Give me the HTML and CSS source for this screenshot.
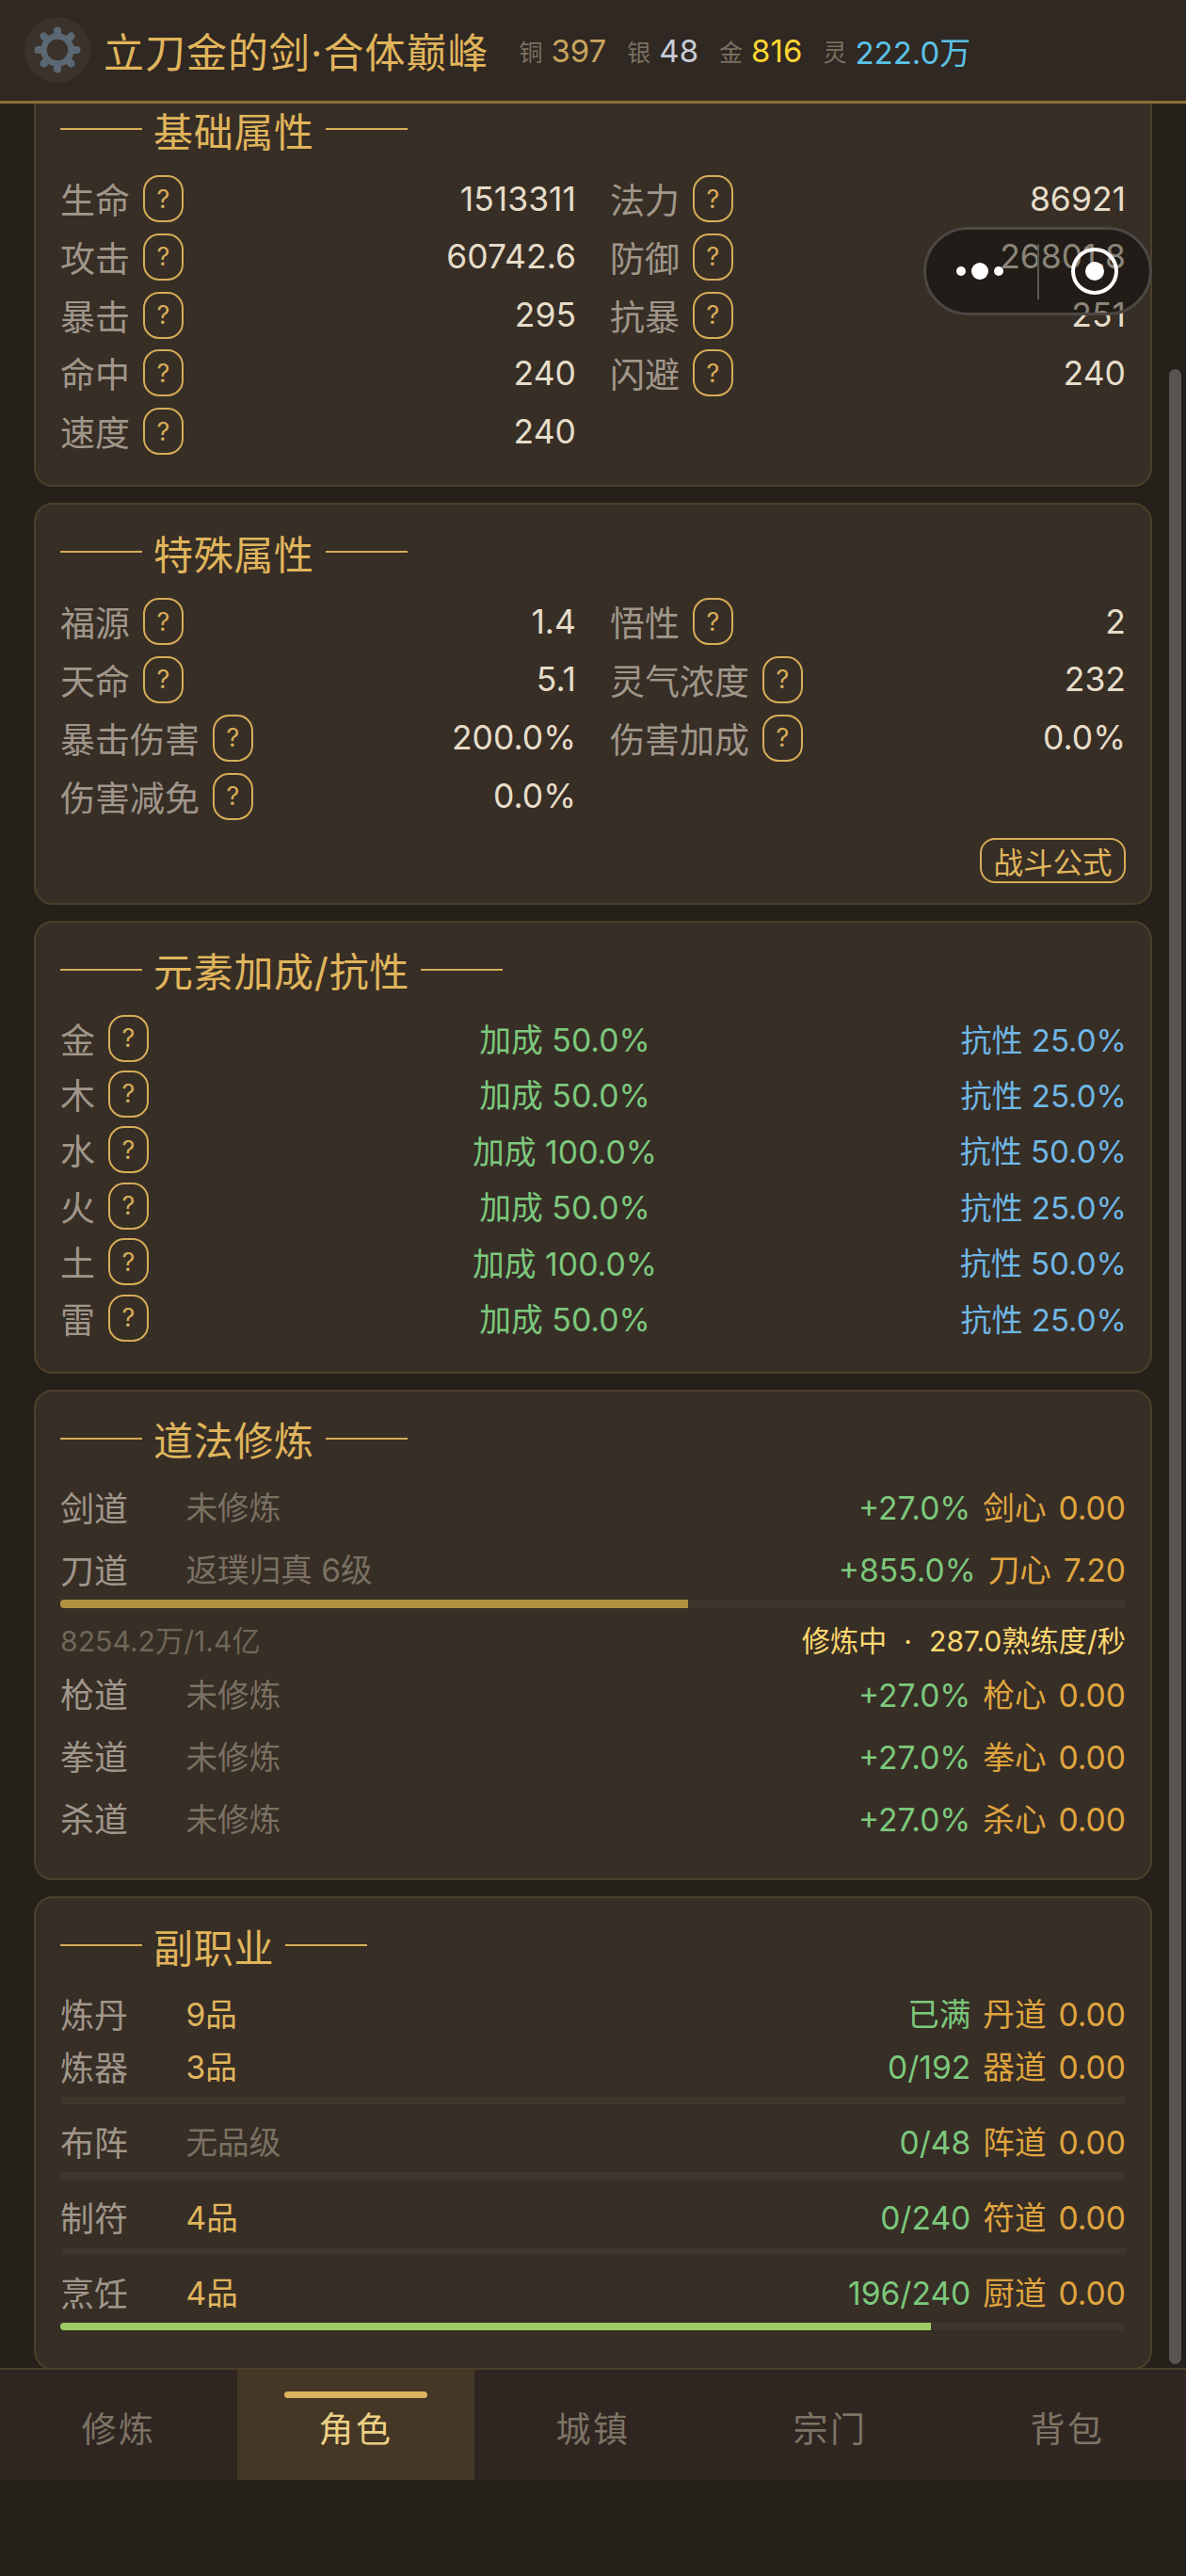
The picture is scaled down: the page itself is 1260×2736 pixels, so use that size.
FILE: index.html
```html
<!DOCTYPE html>
<html lang="zh">
<head>
  <meta charset="utf-8">
  <title>角色</title>
  <link rel="stylesheet" href="styles.css">
</head>
<body>
<div class="app">
  <header class="topbar">
    <div class="gear">
      <svg viewBox="0 0 70 70" width="70" height="70">
        <circle cx="35" cy="35" r="14.5" fill="none" stroke="#5b6873" stroke-width="6.5"/>
        <g stroke="#5b6873" stroke-width="8" stroke-linecap="round">
          <path d="M35 17V14.5M35 53V55.5M17 35H14.5M53 35H55.5"/>
          <path d="M22.3 22.3L20.5 20.5M47.7 22.3L49.5 20.5M22.3 47.7L20.5 49.5M47.7 47.7L49.5 49.5"/>
        </g>
      </svg>
    </div>
    <div class="player">立刀金的剑·合体巅峰</div>
    <div class="money">
      <span class="coin"><i>铜</i><b class="copper">397</b></span>
      <span class="coin"><i>银</i><b class="silver">48</b></span>
      <span class="coin"><i>金</i><b class="gold">816</b></span>
      <span class="coin"><i>灵</i><b class="spirit">222.0万</b></span>
    </div>
  </header>

  <main class="scroller">
    <section class="card card-first">
      <h2 class="card-title"><span>基础属性</span></h2>
      <div class="attr-grid">
        <div class="attr"><span class="attr-name">生命</span><span class="help">?</span><span class="attr-val">1513311</span></div>
        <div class="attr"><span class="attr-name">法力</span><span class="help">?</span><span class="attr-val">86921</span></div>
        <div class="attr"><span class="attr-name">攻击</span><span class="help">?</span><span class="attr-val">60742.6</span></div>
        <div class="attr"><span class="attr-name">防御</span><span class="help">?</span><span class="attr-val">26801.8</span></div>
        <div class="attr"><span class="attr-name">暴击</span><span class="help">?</span><span class="attr-val">295</span></div>
        <div class="attr"><span class="attr-name">抗暴</span><span class="help">?</span><span class="attr-val">251</span></div>
        <div class="attr"><span class="attr-name">命中</span><span class="help">?</span><span class="attr-val">240</span></div>
        <div class="attr"><span class="attr-name">闪避</span><span class="help">?</span><span class="attr-val">240</span></div>
        <div class="attr"><span class="attr-name">速度</span><span class="help">?</span><span class="attr-val">240</span></div>
      </div>
    </section>

    <section class="card card-special">
      <h2 class="card-title"><span>特殊属性</span></h2>
      <div class="attr-grid">
        <div class="attr"><span class="attr-name">福源</span><span class="help">?</span><span class="attr-val">1.4</span></div>
        <div class="attr"><span class="attr-name">悟性</span><span class="help">?</span><span class="attr-val">2</span></div>
        <div class="attr"><span class="attr-name">天命</span><span class="help">?</span><span class="attr-val">5.1</span></div>
        <div class="attr"><span class="attr-name">灵气浓度</span><span class="help">?</span><span class="attr-val">232</span></div>
        <div class="attr"><span class="attr-name">暴击伤害</span><span class="help">?</span><span class="attr-val">200.0%</span></div>
        <div class="attr"><span class="attr-name">伤害加成</span><span class="help">?</span><span class="attr-val">0.0%</span></div>
        <div class="attr"><span class="attr-name">伤害减免</span><span class="help">?</span><span class="attr-val">0.0%</span></div>
      </div>
      <div class="formula-line"><span class="formula">战斗公式</span></div>
    </section>

    <section class="card card-element">
      <h2 class="card-title card-title-element"><span>元素加成/抗性</span></h2>
      <div class="elements">
        <div class="element"><div class="element-name"><span class="attr-name">金</span><span class="help">?</span></div><span class="bonus">加成 50.0%</span><span class="resist">抗性 25.0%</span></div>
        <div class="element"><div class="element-name"><span class="attr-name">木</span><span class="help">?</span></div><span class="bonus">加成 50.0%</span><span class="resist">抗性 25.0%</span></div>
        <div class="element"><div class="element-name"><span class="attr-name">水</span><span class="help">?</span></div><span class="bonus">加成 100.0%</span><span class="resist">抗性 50.0%</span></div>
        <div class="element"><div class="element-name"><span class="attr-name">火</span><span class="help">?</span></div><span class="bonus">加成 50.0%</span><span class="resist">抗性 25.0%</span></div>
        <div class="element"><div class="element-name"><span class="attr-name">土</span><span class="help">?</span></div><span class="bonus">加成 100.0%</span><span class="resist">抗性 50.0%</span></div>
        <div class="element"><div class="element-name"><span class="attr-name">雷</span><span class="help">?</span></div><span class="bonus">加成 50.0%</span><span class="resist">抗性 25.0%</span></div>
      </div>
    </section>

    <section class="card card-dao">
      <h2 class="card-title card-title-dao"><span>道法修炼</span></h2>
      <div class="dao-list">
        <div class="line"><span class="line-name">剑道</span><span class="line-level muted">未修炼</span><div class="line-right"><span class="plus">+27.0%</span><span class="heart">剑心</span><span class="heart">0.00</span></div></div>
        <div class="dao-active">
          <div class="line"><span class="line-name">刀道</span><span class="line-level muted">返璞归真 6级</span><div class="line-right"><span class="plus">+855.0%</span><span class="heart">刀心</span><span class="heart">7.20</span></div></div>
          <div class="bar bar-dao"><div class="bar-fill fill-dao" style="width: 58.9%"></div></div>
          <div class="dao-sub"><span class="exp">8254.2万/1.4亿</span><span class="speed">修炼中<span class="speed-dot">·</span>287.0熟练度/秒</span></div>
        </div>
        <div class="line"><span class="line-name">枪道</span><span class="line-level muted">未修炼</span><div class="line-right"><span class="plus">+27.0%</span><span class="heart">枪心</span><span class="heart">0.00</span></div></div>
        <div class="line"><span class="line-name">拳道</span><span class="line-level muted">未修炼</span><div class="line-right"><span class="plus">+27.0%</span><span class="heart">拳心</span><span class="heart">0.00</span></div></div>
        <div class="line"><span class="line-name">杀道</span><span class="line-level muted">未修炼</span><div class="line-right"><span class="plus">+27.0%</span><span class="heart">杀心</span><span class="heart">0.00</span></div></div>
      </div>
    </section>

    <section class="card card-job">
      <h2 class="card-title card-title-job"><span>副职业</span></h2>
      <div class="job-list">
        <div class="job job-full">
          <div class="line"><span class="line-name">炼丹</span><span class="line-level grade">9品</span><div class="line-right"><span class="plus">已满</span><span class="heart">丹道</span><span class="heart">0.00</span></div></div>
        </div>
        <div class="job">
          <div class="line"><span class="line-name">炼器</span><span class="line-level grade">3品</span><div class="line-right"><span class="plus">0/192</span><span class="heart">器道</span><span class="heart">0.00</span></div></div>
          <div class="bar"></div>
        </div>
        <div class="job">
          <div class="line"><span class="line-name">布阵</span><span class="line-level muted">无品级</span><div class="line-right"><span class="plus">0/48</span><span class="heart">阵道</span><span class="heart">0.00</span></div></div>
          <div class="bar"></div>
        </div>
        <div class="job">
          <div class="line"><span class="line-name">制符</span><span class="line-level grade">4品</span><div class="line-right"><span class="plus">0/240</span><span class="heart">符道</span><span class="heart">0.00</span></div></div>
          <div class="bar"></div>
        </div>
        <div class="job">
          <div class="line"><span class="line-name">烹饪</span><span class="line-level grade">4品</span><div class="line-right"><span class="plus">196/240</span><span class="heart">厨道</span><span class="heart">0.00</span></div></div>
          <div class="bar"><div class="bar-fill fill-job" style="width: 81.67%"></div></div>
        </div>
      </div>
    </section>

    <div class="scroll-thumb"></div>
  </main>

  <nav class="tabs">
    <div class="tab">修炼</div>
    <div class="tab tab-on">角色</div>
    <div class="tab">城镇</div>
    <div class="tab">宗门</div>
    <div class="tab">背包</div>
  </nav>
  <div class="safe-area"></div>

  <div class="capsule">
    <div class="capsule-dots"><i></i><i class="big"></i><i></i></div>
    <div class="capsule-line"></div>
    <div class="capsule-target"><i></i></div>
  </div>
</div>
</body>
</html>
```

FILE: styles.css
```css
* {
  box-sizing: border-box;
}

body {
  margin: 0;
  background: #25201a;
  font-family: Inter, "Noto Sans CJK SC", sans-serif;
  color: #e6ddc9;
}

.app {
  position: relative;
  width: 1260px;
  height: 2736px;
  display: flex;
  flex-direction: column;
  overflow: hidden;
}

/* top bar */
.topbar {
  height: 110px;
  flex: none;
  display: flex;
  align-items: center;
  padding: 0 0 2px 26px;
  background: #302822;
  border-bottom: 3px solid #8a6f38;
}

.gear {
  width: 70px;
  height: 70px;
  border-radius: 50%;
  background: #3a322b;
}

.gear svg {
  display: block;
}

.player {
  margin-left: 14px;
  font-size: 43px;
  letter-spacing: 1px;
  color: #e0b55c;
  white-space: nowrap;
}

.money {
  margin-left: 32px;
  display: flex;
  gap: 22px;
  padding-top: 2px;
}

.coin {
  display: flex;
  align-items: center;
  gap: 9px;
}

.coin i {
  font-style: normal;
  font-size: 25px;
  color: #7a7060;
}

.coin b {
  font-weight: 400;
  font-size: 33px;
}

.copper { color: #c8a55f; }
.silver { color: #c8ccd8; }
.gold { color: #ffd633; }
.spirit { color: #5bc2e7; }

/* scrolling part */
.scroller {
  position: relative;
  flex: 1;
  min-height: 0;
  overflow: hidden;
  padding: 0 36px;
}

.card {
  background: #372e26;
  border: 2px solid #4d3f2a;
  border-radius: 20px;
  padding: 28px 26px 32px;
  margin-bottom: 17px;
}

.card-first {
  margin-top: -25px;
}

.card-special {
  padding-bottom: 21px;
}

.card-element {
  padding-bottom: 34px;
}

.card-dao {
  padding-bottom: 41px;
}

.card-job {
  padding-bottom: 40px;
  margin-bottom: 0;
}

.card-title {
  margin: 0 0 27px;
  height: 44px;
  display: flex;
  align-items: center;
  gap: 12px;
  font-weight: 400;
  font-size: 42px;
  letter-spacing: 0.7px;
  color: #e0b55c;
}

.card-title-element {
  margin-bottom: 24px;
}

.card-title-dao {
  margin-bottom: 30px;
}

.card-title-job {
  margin-bottom: 29.5px;
}

.card-title::before,
.card-title::after {
  content: "";
  width: 87px;
  height: 2px;
  background: #d7ac58;
}

/* attribute grid */
.attr-grid {
  display: grid;
  grid-template-columns: 1fr 1fr;
  column-gap: 36px;
  row-gap: 11.8px;
}

.attr {
  height: 50px;
  display: flex;
  align-items: center;
}

.attr-name {
  font-size: 37px;
  color: #a0968a;
}

.help {
  width: 43px;
  height: 50px;
  margin-left: 14px;
  display: flex;
  align-items: center;
  justify-content: center;
  border: 2px solid #d7ac58;
  border-radius: 17px;
  font-size: 27px;
  color: #d7ac58;
}

.attr-val {
  margin-left: auto;
  font-size: 35.5px;
  color: #e6ddc9;
}

.formula-line {
  display: flex;
  justify-content: flex-end;
  margin-top: 19px;
}

.formula {
  width: 155px;
  height: 48px;
  display: flex;
  align-items: center;
  justify-content: center;
  border: 2px solid #d7ac58;
  border-radius: 16px;
  font-size: 31.5px;
  color: #e0b55c;
}

/* elements */
.elements {
  display: flex;
  flex-direction: column;
  gap: 9.4px;
}

.element {
  height: 50px;
  display: grid;
  grid-template-columns: 150px 772px 211px;
  align-items: center;
  font-size: 33px;
}

.element-name {
  display: flex;
  align-items: center;
}

.bonus {
  text-align: center;
  font-size: 33.8px;
  color: #7cc87c;
}

.resist {
  text-align: right;
  color: #6fb7e6;
}

/* dao and job rows */
.dao-list {
  display: flex;
  flex-direction: column;
  gap: 22px;
}

.line {
  height: 44px;
  padding-bottom: 4px;
  display: flex;
  align-items: center;
  font-size: 33.6px;
}

.line-name {
  width: 133.5px;
  flex: none;
  font-size: 36px;
  color: #a0968a;
}

.muted {
  color: #7a7162;
}

.grade {
  color: #e0b55c;
}

.line-right {
  margin-left: auto;
  display: flex;
  align-items: baseline;
  gap: 13px;
  font-size: 33.6px;
}

.plus {
  color: #7cc87c;
}

.heart {
  color: #e0a53f;
}

.bar {
  height: 8px;
  margin-top: 9.5px;
  border-radius: 4px;
  background: #40352c;
  overflow: hidden;
}

.bar-dao {
  height: 9px;
  margin-top: 9px;
}

.bar-fill {
  height: 100%;
}

.fill-dao {
  background: #b09240;
}

.fill-job {
  background: #9dcc65;
}

.dao-sub {
  display: flex;
  justify-content: space-between;
  align-items: center;
  height: 38px;
  margin-top: 14px;
  margin-bottom: -3.5px;
  font-size: 30.2px;
}

.exp {
  color: #6f6758;
}

.speed {
  color: #ffd970;
}

.speed-dot {
  margin: 0 18px;
}

.job-list {
  display: flex;
  flex-direction: column;
  gap: 18.5px;
}

.job-full {
  margin-bottom: -6.5px;
}

/* bottom tabs */
.tabs {
  flex: none;
  height: 119px;
  display: grid;
  grid-template-columns: repeat(5, 1fr);
  background: #2f2621;
  border-top: 2px solid #4d3f2a;
}

.tab {
  display: flex;
  align-items: center;
  justify-content: center;
  padding-top: 5px;
  font-size: 37px;
  letter-spacing: 2.5px;
  color: #7d7364;
}

.tab-on {
  position: relative;
  background: #443726;
  color: #ecd084;
}

.tab-on::before {
  content: "";
  position: absolute;
  top: 23px;
  left: 50px;
  width: 152px;
  height: 7px;
  border-radius: 4px;
  background: #dcb35f;
}

.safe-area {
  flex: none;
  height: 102px;
  background: #25201a;
}

/* overlays */
.scroll-thumb {
  position: absolute;
  top: 282px;
  right: 5px;
  width: 13px;
  height: 2119px;
  border-radius: 7px;
  background: #575452;
}

.capsule {
  position: absolute;
  top: 241px;
  left: 981px;
  width: 243px;
  height: 94px;
  display: flex;
  align-items: center;
  border: 3px solid #4b4743;
  border-radius: 47px;
  backdrop-filter: brightness(0.6);
}

.capsule-dots {
  width: 114px;
  display: flex;
  align-items: center;
  justify-content: center;
  gap: 6px;
}

.capsule-dots i {
  width: 10px;
  height: 10px;
  border-radius: 50%;
  background: #fff;
}

.capsule-dots i.big {
  width: 18px;
  height: 18px;
}

.capsule-line {
  width: 2px;
  height: 59px;
  margin-left: 4px;
  background: #5a5650;
}

.capsule-target {
  flex: 1;
  display: flex;
  align-items: center;
  justify-content: center;
}

.capsule-target i {
  width: 50px;
  height: 50px;
  display: flex;
  align-items: center;
  justify-content: center;
  border: 4.5px solid #fff;
  border-radius: 50%;
}

.capsule-target i::after {
  content: "";
  width: 20px;
  height: 20px;
  border-radius: 50%;
  background: #fff;
}
```
